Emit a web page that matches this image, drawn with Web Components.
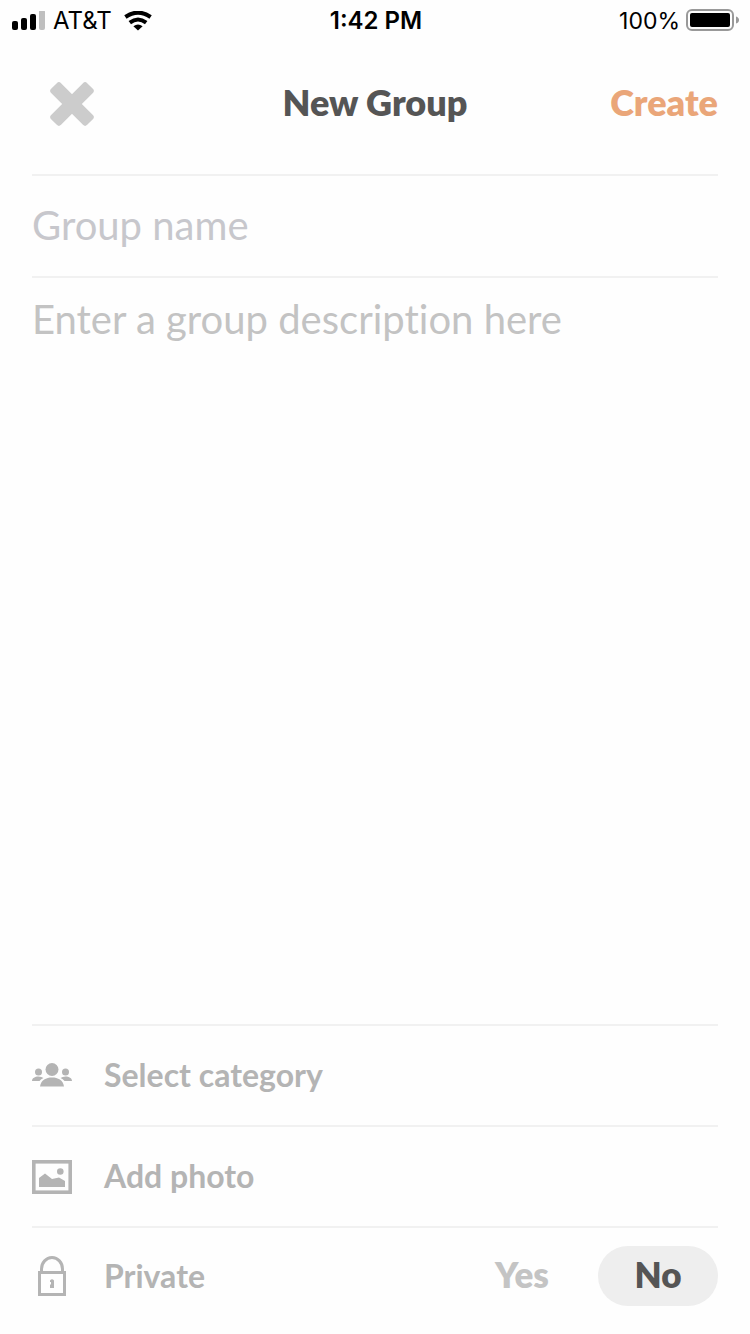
<!DOCTYPE html>
<html lang="en">
<head>
<meta charset="utf-8">
<meta name="viewport" content="width=device-width, initial-scale=1">
<title>New Group</title>
<style>
  body { margin: 0; background: #fefefe; font-family: Lato, "Open Sans", sans-serif; font-variant-ligatures: none; }
</style>
</head>
<body>
<new-group-page></new-group-page>

<script>
const define = (name, html) => {
  const template = document.createElement('template');
  template.innerHTML = html;
  customElements.define(name, class extends HTMLElement {
    constructor() {
      super();
      this.attachShadow({ mode: 'open' }).append(template.content.cloneNode(true));
    }
  });
};

define('status-bar', `
  <style>
    :host { display: grid; grid-template-columns: 1fr auto 1fr; align-items: center; height: 42px; padding: 0 10px 0 12px; color: #000; font: 400 24px/40px Inter, "Liberation Sans", sans-serif; }
    div { display: flex; align-items: center; }
    svg { display: block; flex: none; }
    .carrier { gap: 8px; }
    .wifi { margin-left: 4px; }
    .time { font-weight: 600; }
    .battery { justify-content: flex-end; gap: 6px; font-size: 23px; }
  </style>
  <div class="carrier">
    <svg width="33" height="20" viewBox="0 0 33 20" aria-hidden="true">
      <rect x="0" y="10" width="6" height="9" rx="2"/><rect x="9" y="7" width="6" height="12" rx="2"/>
      <rect x="18" y="3" width="6" height="16" rx="2"/><rect x="27" y="-1" width="6" height="20" rx="2" fill="#bfbfbf"/>
    </svg>
    <span>AT&amp;T</span>
    <svg class="wifi" width="28" height="20" viewBox="0 0 28 20" aria-hidden="true">
      <g fill="none" stroke="#000" stroke-width="4"><path d="M1.400 6Q14-2.800 26.600 6"/><path d="M5.800 11.600Q14 5.400 22.200 11.600"/></g>
      <path d="M14 19.500L9.400 15.200Q14 11.600 18.600 15.200Z"/>
    </svg>
  </div>
  <div class="time">1:42 PM</div>
  <div class="battery">
    <span>100%</span>
    <svg width="54" height="24" viewBox="0 0 54 24" aria-hidden="true">
      <rect x="1" y="1" width="46" height="20" rx="5" fill="none" stroke="#999" stroke-width="2"/>
      <rect x="4" y="4" width="40" height="14" rx="2"/><path d="M50 7.500Q53 8.500 53 11T50 14.500Z" fill="#999"/>
    </svg>
  </div>`);

define('page-header', `
  <style>
    :host { display: grid; grid-template-columns: 1fr auto 1fr; align-items: center; height: 124px; margin: 0 32px; padding-bottom: 8px; border-bottom: 2px solid #f1f1f1; }
    h1, .create { margin: 0; border: 0; padding: 0 0 4px; background: none; font: 800 36px/44px Lato, sans-serif; color: #555; }
    button { appearance: none; border: 0; background: none; cursor: pointer; }
    .close { justify-self: start; padding: 16px; }
    .create { justify-self: end; color: #eaa679; }
    svg { display: block; }
  </style>
  <button class="close" type="button" aria-label="Close">
    <svg width="48" height="48" viewBox="0 0 48 48" fill="#ccc"><g transform="rotate(45 24 24)"><rect x="-1.500" y="17" width="51" height="14" rx="3"/><rect x="17" y="-1.500" width="14" height="51" rx="3"/></g></svg>
  </button>
  <h1><slot></slot></h1>
  <button class="create" type="button">Create</button>`);

define('group-fields', `
  <style>
    :host { display: flex; flex-direction: column; flex: 1; margin: 0 32px; }
    input, textarea { display: block; width: 100%; box-sizing: border-box; margin: 0; border: 0; padding: 0; background: none; outline: none; color: #555; font: 400 40px/48px Lato, sans-serif; font-variant-ligatures: none; }
    input { height: 102px; padding-bottom: 2px; border-bottom: 2px solid #f1f1f1; }
    textarea { flex: 1; padding-top: 17px; resize: none; }
    ::placeholder { opacity: 1; }
    input::placeholder { color: #c7c7cc; }
    textarea::placeholder { color: #c3c3c3; }
  </style>
  <input type="text" aria-label="Group name" placeholder="Group name">
  <textarea aria-label="Group description" placeholder="Enter a group description here"></textarea>`);

define('option-row', `
  <style>
    :host { display: flex; align-items: center; height: 99px; margin: 0 32px; border-top: 2px solid #f1f1f1; }
    button { display: flex; flex: 1; align-items: center; gap: 32px; height: 100%; appearance: none; margin: 0; border: 0; padding: 0; background: none; color: #b4b4b4; font: 700 32px/40px Lato, sans-serif; text-align: left; cursor: pointer; }
    ::slotted(svg) { display: block; width: 40px; height: 40px; flex: none; }
    span { padding-bottom: 2px; }
  </style>
  <button type="button"><slot name="icon"></slot><span><slot></slot></span></button>`);

define('privacy-row', `
  <style>
    :host { display: block; height: 106px; margin: 0 32px; border-top: 2px solid #f1f1f1; }
    .row { display: flex; align-items: center; justify-content: space-between; height: 96px; }
    .label { display: flex; align-items: center; gap: 32px; color: #b4b4b4; font: 700 32px/40px Lato, sans-serif; }
    svg { display: block; flex: none; }
    .choices { display: flex; gap: 16px; }
    label { display: block; width: 120px; padding-bottom: 4px; border-radius: 30px; text-align: center; font: 800 35px/56px Lato, sans-serif; color: #c4c4c4; cursor: pointer; }
    input { position: absolute; opacity: 0; margin: 0; pointer-events: none; }
    label:has(:checked) { background: #eee; color: #555; }
  </style>
  <div class="row" role="radiogroup" aria-labelledby="privacy">
    <div class="label">
      <svg width="40" height="40" viewBox="0 0 40 40" fill="none" stroke="#b4b4b4" stroke-width="3" aria-hidden="true">
        <rect x="7.500" y="16.500" width="25" height="22"/><path d="M9.500 16V13A10.500 11.500 0 0 1 30.500 13V16"/>
        <path d="M18 26V24.500Q20 22 22 24.500V32H18V29L19 28V26Z" fill="#b4b4b4" stroke="none"/>
      </svg>
      <span id="privacy">Private</span>
    </div>
    <div class="choices">
      <label><input type="radio" name="private" value="yes">Yes</label>
      <label><input type="radio" name="private" value="no" checked>No</label>
    </div>
  </div>`);

define('new-group-page', `
  <style>
    :host { display: flex; flex-direction: column; min-height: 100vh; }
  </style>
  <status-bar></status-bar>
  <page-header>New Group</page-header>
  <group-fields></group-fields>
  <option-row>
    <svg slot="icon" viewBox="0 0 40 40" fill="#b4b4b4" aria-hidden="true">
      <circle cx="20" cy="13.500" r="6.500"/><path d="M8 30.500C9 24 14 21.500 20 21.500S31 24 32 30.500Z"/>
      <circle cx="6.500" cy="16" r="3.500"/><circle cx="33.500" cy="16" r="3.500"/>
      <path d="M0 25C0 22 3 20.500 6.500 20.500Q9.500 20.500 11.500 22Q9 23 7.500 25Z"/><path d="M40 25C40 22 37 20.500 33.500 20.500Q30.500 20.500 28.500 22Q31 23 32.500 25Z"/>
    </svg>Select category</option-row>
  <option-row>
    <svg slot="icon" viewBox="0 0 40 40" fill="#b4b4b4" aria-hidden="true">
      <rect x="1.800" y="4.800" width="36.400" height="30.400" fill="none" stroke="#b4b4b4" stroke-width="3.600"/>
      <circle cx="28.300" cy="14.500" r="3.300"/><path d="M7 30V21L13 16.500L20 22L27 20.500L33 24V30Z"/>
    </svg>Add photo</option-row>
  <privacy-row></privacy-row>`);
</script>
</body>
</html>
